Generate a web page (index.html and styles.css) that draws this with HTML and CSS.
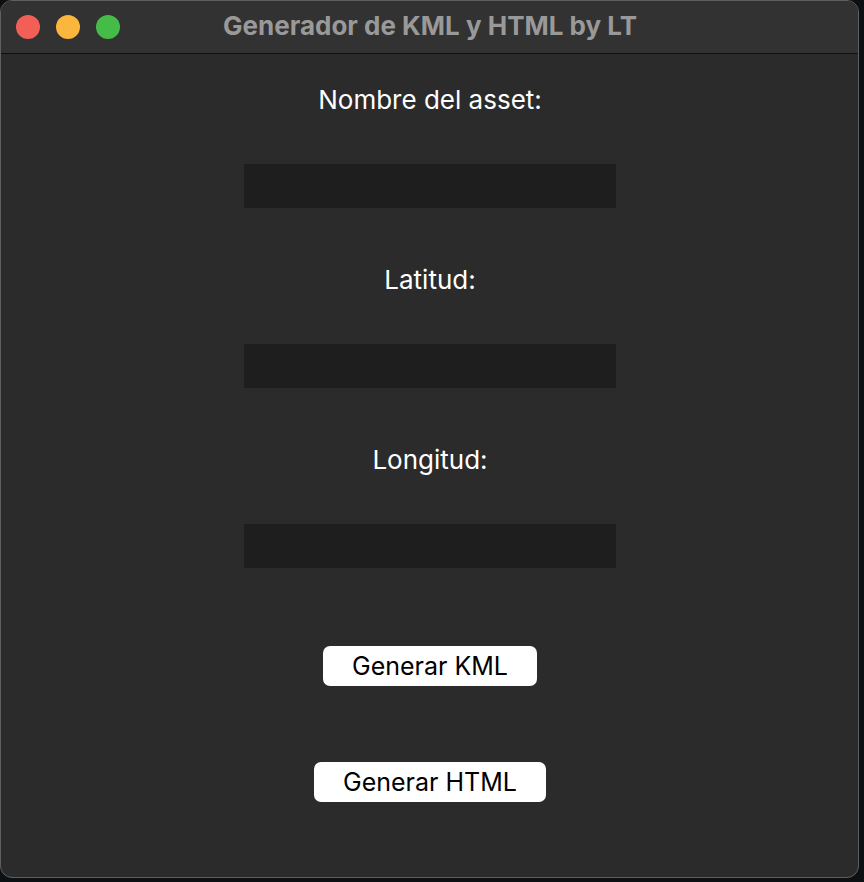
FILE: index.html
```html
<!DOCTYPE html>
<html lang="es">
<head>
<meta charset="utf-8">
<title>Generador de KML y HTML by LT</title>
<link rel="stylesheet" href="styles.css">
</head>
<body>
<div class="window">
  <div class="titlebar">
    <div class="lights">
      <span class="light red"></span>
      <span class="light yellow"></span>
      <span class="light green"></span>
    </div>
    <div class="title">Generador de KML y HTML by LT</div>
  </div>
  <div class="content">
    <label class="label">Nombre del asset:</label>
    <div class="input"></div>
    <label class="label">Latitud:</label>
    <div class="input"></div>
    <label class="label">Longitud:</label>
    <div class="input"></div>
    <button class="btn btn-kml">Generar KML</button>
    <button class="btn btn-html">Generar HTML</button>
  </div>
</div>
</body>
</html>
```
FILE: styles.css
```css
html, body {
  margin: 0;
  padding: 0;
  background: #0c1013;
  width: 864px;
  height: 882px;
  overflow: hidden;
}
.window {
  width: 859px;
  height: 878px;
  box-sizing: border-box;
  background: #2b2b2b;
  border: 1px solid #5f5f5f;
  border-radius: 12px;
  overflow: hidden;
  display: flex;
  flex-direction: column;
  font-family: Inter, "Liberation Sans", sans-serif;
}
.titlebar {
  height: 52px;
  flex: none;
  background: #323232;
  border-bottom: 1px solid #111;
  display: flex;
  align-items: center;
  position: relative;
}
.lights {
  display: flex;
  gap: 16px;
  padding-left: 15px;
}
.light {
  width: 24px;
  height: 24px;
  border-radius: 50%;
  display: block;
}
.red { background: #f25f57; }
.yellow { background: #fbb63e; }
.green { background: #45bc47; }
.title {
  position: absolute;
  left: 1px;
  right: 0;
  text-align: center;
  color: #999999;
  font-weight: 700;
  font-size: 26px;
  line-height: 30px;
  top: 10px;
}
.content {
  display: flex;
  flex-direction: column;
  align-items: center;
  padding-top: 31px;
  padding-left: 1px;
}
.label {
  color: #ffffff;
  font-size: 26px;
  line-height: 30px;
  height: 30px;
  margin-bottom: 49px;
}
.input {
  width: 372px;
  height: 44px;
  background: #1e1e1e;
  margin-bottom: 57px;
}
.btn {
  font-family: Inter, "Liberation Sans", sans-serif;
  font-size: 25px;
  color: #000;
  background: #ffffff;
  border: none;
  border-radius: 7px;
  height: 40px;
  padding: 0 29px;
}
.btn-kml { margin-top: 21px; }
.btn-html { margin-top: 76px; }
```
